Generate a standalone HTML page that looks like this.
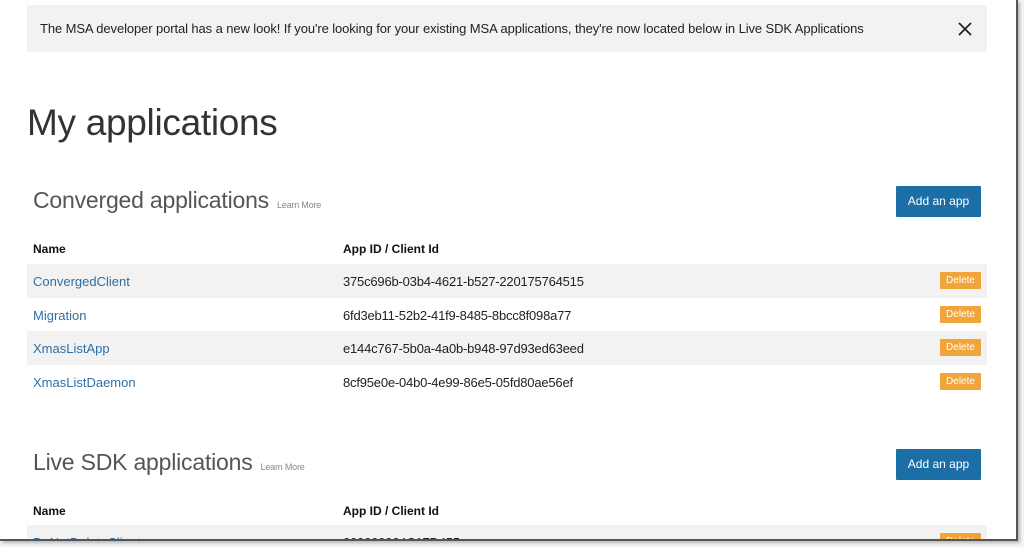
<!DOCTYPE html>
<html><head><meta charset="utf-8"><style>
*{margin:0;padding:0;box-sizing:border-box}
body{width:1024px;height:547px;background:#f4f4f4;font-family:"Liberation Sans",sans-serif;position:relative;overflow:hidden}
.page{position:absolute;left:0;top:0;width:1018px;height:541px;background:#fff;border-right:2px solid #555;border-bottom:2px solid #555;box-shadow:2px 2px 3px rgba(0,0,0,.25);overflow:hidden}
.banner{position:absolute;left:27px;top:5px;width:960px;height:47px;background:#f2f2f2}
.banner span{position:absolute;left:13px;top:16px;font-size:13px;color:#222;letter-spacing:-.1px}
.x{position:absolute;left:930px;top:16px;width:16px;height:16px}
h1{position:absolute;left:27px;top:102px;font-size:37px;font-weight:normal;color:#333;letter-spacing:-.3px}
h2{position:absolute;left:33px;font-size:23px;font-weight:normal;color:#555;letter-spacing:-.2px}
h2 small{font-size:9px;color:#888;margin-left:8px}
.btn{position:absolute;left:896px;width:85px;height:31px;background:#1c6ea6;color:#fff;font-size:12px;text-align:center;line-height:31px;border-radius:1px}
.th{position:absolute;font-size:12px;font-weight:bold;color:#111}
.row{position:absolute;left:27px;width:960px;height:33.5px}
.row.g{background:#f2f2f2}
.row .n{position:absolute;left:6px;top:10px;font-size:13px;color:#2f6fa6}
.row .i{position:absolute;left:316px;top:10px;font-size:13px;color:#222;letter-spacing:-.2px}
.row .d{position:absolute;left:913px;top:8px;width:41px;height:17px;background:#f0a43a;color:#fff;font-size:10px;text-align:center;line-height:17px;border-radius:1px}
</style></head><body><div class="page">
<div class="banner"><span>The MSA developer portal has a new look! If you're looking for your existing MSA applications, they're now located below in Live SDK Applications</span>
<svg class="x" viewBox="0 0 16 16"><path d="M2 2L14 14M14 2L2 14" stroke="#222" stroke-width="1.8"/></svg></div>
<h1>My applications</h1>
<h2 style="top:187px">Converged applications<small>Learn More</small></h2>
<div class="btn" style="top:186px">Add an app</div>
<div class="th" style="left:33px;top:242px">Name</div>
<div class="th" style="left:343px;top:242px">App ID / Client Id</div>
<div class="row g" style="top:264px"><span class="n">ConvergedClient</span><span class="i">375c696b-03b4-4621-b527-220175764515</span><span class="d">Delete</span></div>
<div class="row" style="top:298px"><span class="n">Migration</span><span class="i">6fd3eb11-52b2-41f9-8485-8bcc8f098a77</span><span class="d">Delete</span></div>
<div class="row g" style="top:331px"><span class="n">XmasListApp</span><span class="i">e144c767-5b0a-4a0b-b948-97d93ed63eed</span><span class="d">Delete</span></div>
<div class="row" style="top:365px"><span class="n">XmasListDaemon</span><span class="i">8cf95e0e-04b0-4e99-86e5-05fd80ae56ef</span><span class="d">Delete</span></div>
<h2 style="top:449px">Live SDK applications<small>Learn More</small></h2>
<div class="btn" style="top:449px">Add an app</div>
<div class="th" style="left:33px;top:504px">Name</div>
<div class="th" style="left:343px;top:504px">App ID / Client Id</div>
<div class="row g" style="top:525px"><span class="n">DoNotDeleteClient</span><span class="i">000000004C17D455</span><span class="d">Delete</span></div>
</div></body></html>
